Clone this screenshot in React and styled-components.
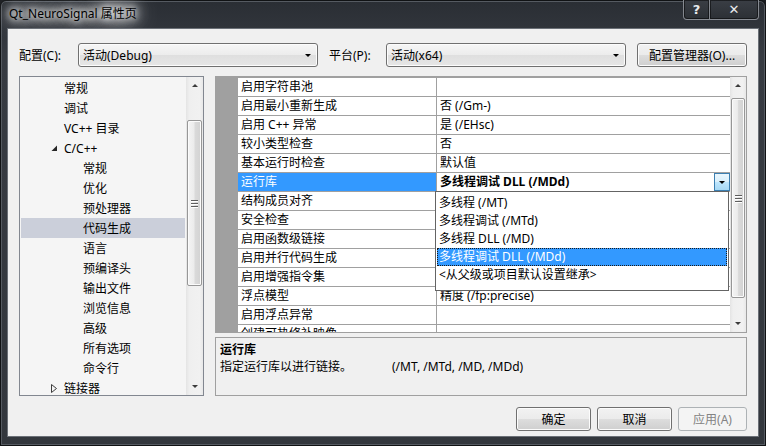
import React from 'react';
import styled, { createGlobalStyle, css } from 'styled-components';

const uiFont = `"Noto Sans", "Noto Sans CJK SC", sans-serif`;

const GlobalStyle = createGlobalStyle`
  html, body {
    margin: 0;
    padding: 0;
    background: #1b1d21;
  }
  * {
    box-sizing: border-box;
  }
`;

const Window = styled.div`
  width: 766px;
  height: 446px;
  display: flex;
  flex-direction: column;
  padding: 0 6px 8px 6px;
  border: 1px solid #101214;
  border-radius: 6px 6px 0 0;
  background: linear-gradient(to bottom, #2a2e34 0%, #373b42 12%, #33373d 100%);
  box-shadow: inset 0 0 0 1px #555a61;
  font-family: ${uiFont};
  font-size: 12px;
  color: #000;
`;

const TitleBar = styled.div`
  height: 27px;
  display: flex;
  align-items: flex-start;
  justify-content: space-between;
`;

const Caption = styled.div`
  padding: 5px 0 0 2px;
  line-height: 16px;
  color: #000;
  text-shadow: 0 0 6px #fff, 0 0 10px #fff, 0 0 14px #fff, 0 0 18px #fff,
    0 0 24px rgba(255, 255, 255, 0.9), 0 0 30px rgba(255, 255, 255, 0.7);
`;

const CaptionButtons = styled.div`
  display: flex;
  margin-top: -1px;
`;

const CaptionButton = styled.div`
  width: ${(p) => p.$w}px;
  height: 20px;
  display: flex;
  align-items: center;
  justify-content: center;
  border: 1px solid rgba(200, 205, 212, 0.55);
  border-top: none;
  border-left-width: ${(p) => (p.$first ? 1 : 0)}px;
  border-radius: ${(p) => (p.$first ? '0 0 0 4px' : '0 0 4px 0')};
  background: linear-gradient(to bottom, #3a3e45, #2c3035);
  box-shadow: inset 0 0 0 1px rgba(0, 0, 0, 0.5);
  color: #e8eaed;
  font-family: "DejaVu Sans", sans-serif;
  font-weight: bold;
  font-size: 13px;
`;

const Client = styled.div`
  flex: 1;
  display: flex;
  flex-direction: column;
  padding: 14px 11px 5px 11px;
  background: #f0f0f0;
  border: 1px solid #6b7077;
`;

const ConfigRow = styled.div`
  height: 24px;
  display: flex;
  align-items: center;
`;

const FieldLabel = styled.div`
  width: ${(p) => p.$w}px;
  padding-left: ${(p) => p.$pad || 0}px;
  white-space: nowrap;
`;

const Combo = styled.div`
  width: 240px;
  height: 24px;
  display: flex;
  align-items: center;
  justify-content: space-between;
  padding: 0 6px 0 4px;
  border: 1px solid #707070;
  border-radius: 3px;
  background: linear-gradient(to bottom, #f6f6f6 0%, #ececec 50%, #dfdfdf 51%, #e6e6e6 100%);
  box-shadow: inset 0 0 0 1px #fcfcfc;
`;

const Triangle = styled.span`
  width: 0;
  height: 0;
  border-left: ${(p) => p.$s}px solid transparent;
  border-right: ${(p) => p.$s}px solid transparent;
  ${(p) =>
    p.$up
      ? css`border-bottom: ${p.$s}px solid ${p.$c || '#000'};`
      : css`border-top: ${p.$s}px solid ${p.$c || '#000'};`}
`;

const Button = styled.div`
  width: ${(p) => p.$w}px;
  height: 24px;
  display: flex;
  align-items: center;
  justify-content: center;
  border: 1px solid ${(p) => (p.$disabled ? '#adb2b5' : '#707070')};
  border-radius: 3px;
  color: ${(p) => (p.$disabled ? '#838383' : '#000')};
  background: ${(p) =>
    p.$disabled
      ? '#f4f4f4'
      : 'linear-gradient(to bottom, #f2f2f2 0%, #ebebeb 50%, #dddddd 51%, #cfcfcf 100%)'};
  box-shadow: inset 0 0 0 1px ${(p) => (p.$disabled ? '#f4f4f4' : '#fcfcfc')};
  white-space: nowrap;
`;

const Main = styled.div`
  height: 320px;
  margin-top: 9px;
  display: flex;
  gap: 11px;
`;

const Tree = styled.div`
  width: 186px;
  display: flex;
  border: 1px solid #828790;
  background: #f5f5f5;
`;

const TreeList = styled.div`
  flex: 1;
  padding-top: 1px;
  overflow: hidden;
`;

const TreeItem = styled.div`
  height: 20px;
  margin: 0 1px;
  display: flex;
  align-items: center;
  padding-left: ${(p) => 25 + p.$level * 19}px;
  background: ${(p) => (p.$selected ? '#cbcfda' : 'transparent')};
  white-space: nowrap;
`;

const Expander = styled.span`
  width: 16px;
  height: 20px;
  margin-right: 2px;
  display: flex;
  align-items: center;
  justify-content: center;
`;

const ScrollBar = styled.div`
  width: ${(p) => p.$w}px;
  display: flex;
  flex-direction: column;
  background: linear-gradient(to right, #e4e4e4 0%, #efefef 20%, #f1f1f1 80%, #e8e8e8 100%);
`;

const ScrollArrow = styled.div`
  height: 17px;
  display: flex;
  align-items: center;
  justify-content: center;
`;

const ScrollTrack = styled.div`
  flex: 1;
`;

const ScrollThumb = styled.div`
  height: ${(p) => p.$h}px;
  margin: ${(p) => p.$top}px 1px 0 1px;
  display: flex;
  flex-direction: column;
  align-items: center;
  justify-content: center;
  gap: 2px;
  border: 1px solid #979797;
  border-radius: 2px;
  background: linear-gradient(to right, #f4f4f4 0%, #ececec 45%, #dadada 55%, #d2d2d2 100%);
  box-shadow: inset 0 0 0 1px #fbfbfb;
`;

const Grip = styled.span`
  width: 7px;
  height: 1px;
  background: #5e5e5e;
  box-shadow: 0 1px 0 #fff;
`;

const PropertyPane = styled.div`
  flex: 1;
  display: flex;
  flex-direction: column;
  gap: 4px;
`;

const Grid = styled.div`
  position: relative;
  height: 257px;
  display: flex;
  border: 1px solid #a0a0a0;
  background: #a0a0a0;
`;

const Rows = styled.div`
  width: 514px;
  padding-top: 1px;
  display: flex;
  flex-direction: column;
  gap: 1px;
  overflow: hidden;
`;

const Row = styled.div`
  flex: 0 0 18px;
  display: grid;
  grid-template-columns: 21px 198px 1fr;
  column-gap: 1px;
  line-height: 18px;
`;

const NameCell = styled.div`
  padding-left: 3px;
  background: ${(p) => (p.$selected ? '#3399ff' : '#fff')};
  color: ${(p) => (p.$selected ? '#fff' : '#000')};
  white-space: nowrap;
  overflow: hidden;
`;

const ValueCell = styled.div`
  display: flex;
  align-items: center;
  justify-content: space-between;
  padding-left: 3px;
  background: #fff;
  font-weight: ${(p) => (p.$bold ? 'bold' : 'normal')};
  white-space: nowrap;
  overflow: hidden;
`;

const DropButton = styled.div`
  width: 16px;
  height: 18px;
  display: flex;
  align-items: center;
  justify-content: center;
  border: 1px solid #3c7fb1;
  background: linear-gradient(to bottom, #eaf6fd 0%, #d9f0fc 50%, #bee6fd 51%, #a7d9f5 100%);
`;

const DropList = styled.div`
  position: absolute;
  left: 219px;
  top: 114px;
  width: 294px;
  height: 100px;
  padding: 2px 1px 0 1px;
  border: 1px solid #646464;
  background: #fff;
  z-index: 2;
`;

const DropItem = styled.div`
  height: 18px;
  line-height: 18px;
  padding-left: 2px;
  white-space: nowrap;
  ${(p) =>
    p.$selected &&
    css`
      background: #3399ff;
      color: #fff;
      outline: 1px dotted #1a1a1a;
      outline-offset: -1px;
    `}
`;

const Description = styled.div`
  flex: 1;
  padding: 3px 4px;
  border: 1px solid #a0a0a0;
  background: #f0f0f0;
  line-height: 17px;
`;

const DescTitle = styled.div`
  font-weight: bold;
`;

const DescSwitches = styled.span`
  margin-left: 40px;
`;

const Footer = styled.div`
  margin-top: 11px;
  display: flex;
  justify-content: flex-end;
  gap: 6px;
`;

const ExpandedGlyph = () => (
  <svg width="7" height="7" viewBox="0 0 7 7">
    <polygon points="6,0.5 6,6 0.5,6" fill="#262626" />
  </svg>
);

const CollapsedGlyph = () => (
  <svg width="6" height="9" viewBox="0 0 6 9">
    <polygon points="0.5,0.5 5.5,4.5 0.5,8.5" fill="none" stroke="#3c3c3c" strokeWidth="1" />
  </svg>
);

const treeItems = [
  { label: '常规', level: 0 },
  { label: '调试', level: 0 },
  { label: 'VC++ 目录', level: 0 },
  { label: 'C/C++', level: 0, expander: 'open' },
  { label: '常规', level: 1 },
  { label: '优化', level: 1 },
  { label: '预处理器', level: 1 },
  { label: '代码生成', level: 1, selected: true },
  { label: '语言', level: 1 },
  { label: '预编译头', level: 1 },
  { label: '输出文件', level: 1 },
  { label: '浏览信息', level: 1 },
  { label: '高级', level: 1 },
  { label: '所有选项', level: 1 },
  { label: '命令行', level: 1 },
  { label: '链接器', level: 0, expander: 'closed' },
];

const properties = [
  ['启用字符串池', ''],
  ['启用最小重新生成', '否 (/Gm-)'],
  ['启用 C++ 异常', '是 (/EHsc)'],
  ['较小类型检查', '否'],
  ['基本运行时检查', '默认值'],
  ['运行库', '多线程调试 DLL (/MDd)', true],
  ['结构成员对齐', '默认设置'],
  ['安全检查', '启用安全检查 (/GS)'],
  ['启用函数级链接', ''],
  ['启用并行代码生成', ''],
  ['启用增强指令集', '未设置'],
  ['浮点模型', '精度 (/fp:precise)'],
  ['启用浮点异常', ''],
  ['创建可热修补映像', ''],
];

const runtimeOptions = [
  '多线程 (/MT)',
  '多线程调试 (/MTd)',
  '多线程 DLL (/MD)',
  '多线程调试 DLL (/MDd)',
  '<从父级或项目默认设置继承>',
];

const VScroll = ({ width, thumbTop, thumbHeight }) => (
  <ScrollBar $w={width}>
    <ScrollArrow>
      <Triangle $up $s={3.5} $c="#3b3b3b" />
    </ScrollArrow>
    <ScrollTrack>
      <ScrollThumb $top={thumbTop} $h={thumbHeight}>
        <Grip />
        <Grip />
        <Grip />
      </ScrollThumb>
    </ScrollTrack>
    <ScrollArrow>
      <Triangle $s={3.5} $c="#3b3b3b" />
    </ScrollArrow>
  </ScrollBar>
);

export default function App() {
  return (
    <>
      <GlobalStyle />
      <Window>
        <TitleBar>
          <Caption>Qt_NeuroSignal 属性页</Caption>
          <CaptionButtons>
            <CaptionButton $w={27} $first>
              ?
            </CaptionButton>
            <CaptionButton $w={49}>✕</CaptionButton>
          </CaptionButtons>
        </TitleBar>
        <Client>
          <ConfigRow>
            <FieldLabel $w={59}>配置(C):</FieldLabel>
            <Combo>
              <span>活动(Debug)</span>
              <Triangle $s={3.5} />
            </Combo>
            <FieldLabel $w={68} $pad={11}>
              平台(P):
            </FieldLabel>
            <Combo>
              <span>活动(x64)</span>
              <Triangle $s={3.5} />
            </Combo>
            <FieldLabel $w={11} />
            <Button $w={110}>配置管理器(O)...</Button>
          </ConfigRow>
          <Main>
            <Tree>
              <TreeList>
                {treeItems.map((item, i) => (
                  <TreeItem key={i} $level={item.level} $selected={item.selected}>
                    <Expander>
                      {item.expander === 'open' && <ExpandedGlyph />}
                      {item.expander === 'closed' && <CollapsedGlyph />}
                    </Expander>
                    {item.label}
                  </TreeItem>
                ))}
              </TreeList>
              <VScroll width={17} thumbTop={26} thumbHeight={166} />
            </Tree>
            <PropertyPane>
              <Grid>
                <Rows>
                  {properties.map(([name, value, selected], i) => (
                    <Row key={i}>
                      <span />
                      <NameCell $selected={selected}>{name}</NameCell>
                      <ValueCell $bold={selected}>
                        <span>{value}</span>
                        {selected && (
                          <DropButton>
                            <Triangle $s={3.5} />
                          </DropButton>
                        )}
                      </ValueCell>
                    </Row>
                  ))}
                </Rows>
                <VScroll width={16} thumbTop={4} thumbHeight={200} />
                <DropList>
                  {runtimeOptions.map((opt, i) => (
                    <DropItem key={i} $selected={i === 3}>
                      {opt}
                    </DropItem>
                  ))}
                </DropList>
              </Grid>
              <Description>
                <DescTitle>运行库</DescTitle>
                <div>
                  指定运行库以进行链接。
                  <DescSwitches>(/MT, /MTd, /MD, /MDd)</DescSwitches>
                </div>
              </Description>
            </PropertyPane>
          </Main>
          <Footer>
            <Button $w={75}>确定</Button>
            <Button $w={75}>取消</Button>
            <Button $w={69} $disabled>
              应用(A)
            </Button>
          </Footer>
        </Client>
      </Window>
    </>
  );
}
